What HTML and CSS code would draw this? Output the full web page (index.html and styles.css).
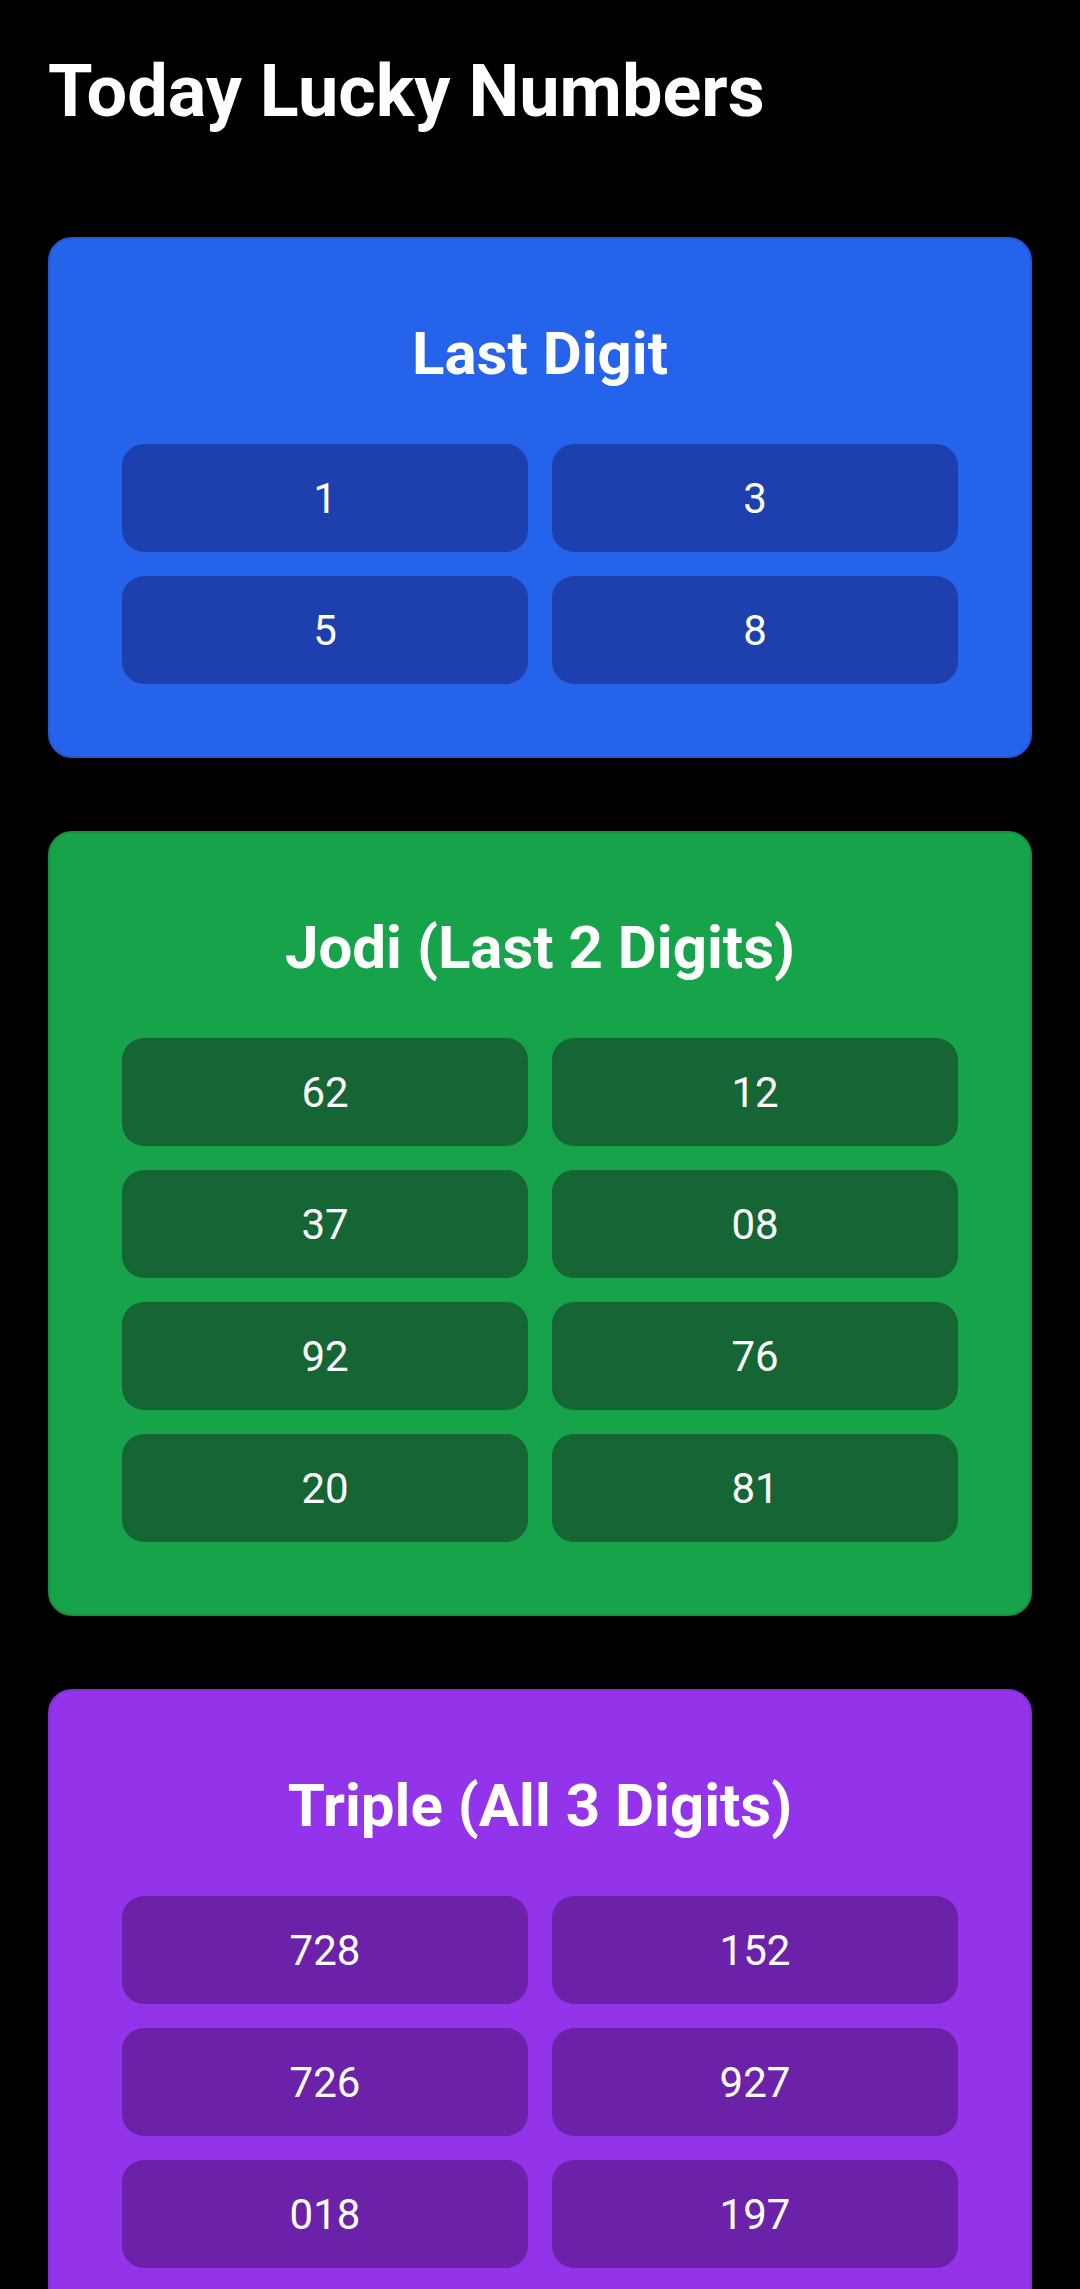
FILE: index.html
```html
<!DOCTYPE html>
<html lang="en">
<head>
<meta charset="utf-8">
<title>Today Lucky Numbers</title>
<link rel="stylesheet" href="styles.css">
</head>
<body>
<main class="page">
  <h1 class="page-title">Today Lucky Numbers</h1>

  <section class="card card-blue">
    <h2 class="card-title">Last Digit</h2>
    <div class="num-grid">
      <div class="num">1</div>
      <div class="num">3</div>
      <div class="num">5</div>
      <div class="num">8</div>
    </div>
  </section>

  <section class="card card-green">
    <h2 class="card-title">Jodi (Last 2 Digits)</h2>
    <div class="num-grid">
      <div class="num">62</div>
      <div class="num">12</div>
      <div class="num">37</div>
      <div class="num">08</div>
      <div class="num">92</div>
      <div class="num">76</div>
      <div class="num">20</div>
      <div class="num">81</div>
    </div>
  </section>

  <section class="card card-purple">
    <h2 class="card-title">Triple (All 3 Digits)</h2>
    <div class="num-grid">
      <div class="num">728</div>
      <div class="num">152</div>
      <div class="num">726</div>
      <div class="num">927</div>
      <div class="num">018</div>
      <div class="num">197</div>
    </div>
  </section>
</main>
</body>
</html>
```

FILE: styles.css
```css
html, body {
  margin: 0;
  padding: 0;
  background: #000000;
}

body {
  font-family: Roboto, "Noto Sans", "Liberation Sans", sans-serif;
  color: #ffffff;
}

.page {
  padding: 48px 48px 48px 48px;
  display: flex;
  flex-direction: column;
  gap: 73px;
}

.page-title {
  margin: 0 0 28px 0;
  font-size: 72px;
  line-height: 88px;
  font-weight: 700;
  color: #ffffff;
}

.card {
  border-radius: 24px;
  border: 2px solid transparent;
  padding: 72px;
  display: flex;
  flex-direction: column;
  gap: 48px;
}

.card-blue {
  background: #2563eb;
  border-color: #2159d6;
}

.card-blue .num {
  background: #1e40af;
}

.card-green {
  background: #16a34a;
  border-color: #149341;
}

.card-green .num {
  background: #166534;
}

.card-purple {
  background: #9333ea;
  border-color: #862ed6;
}

.card-purple .num {
  background: #6b21a8;
}

.card-title {
  margin: 0;
  text-align: center;
  font-size: 60px;
  line-height: 85px;
  font-weight: 700;
  color: #ffffff;
}

.num-grid {
  display: grid;
  grid-template-columns: 1fr 1fr;
  gap: 24px;
}

.num {
  height: 108px;
  border-radius: 22px;
  display: flex;
  align-items: center;
  justify-content: center;
  font-size: 42px;
  font-weight: 400;
  color: #ffffff;
}
```
